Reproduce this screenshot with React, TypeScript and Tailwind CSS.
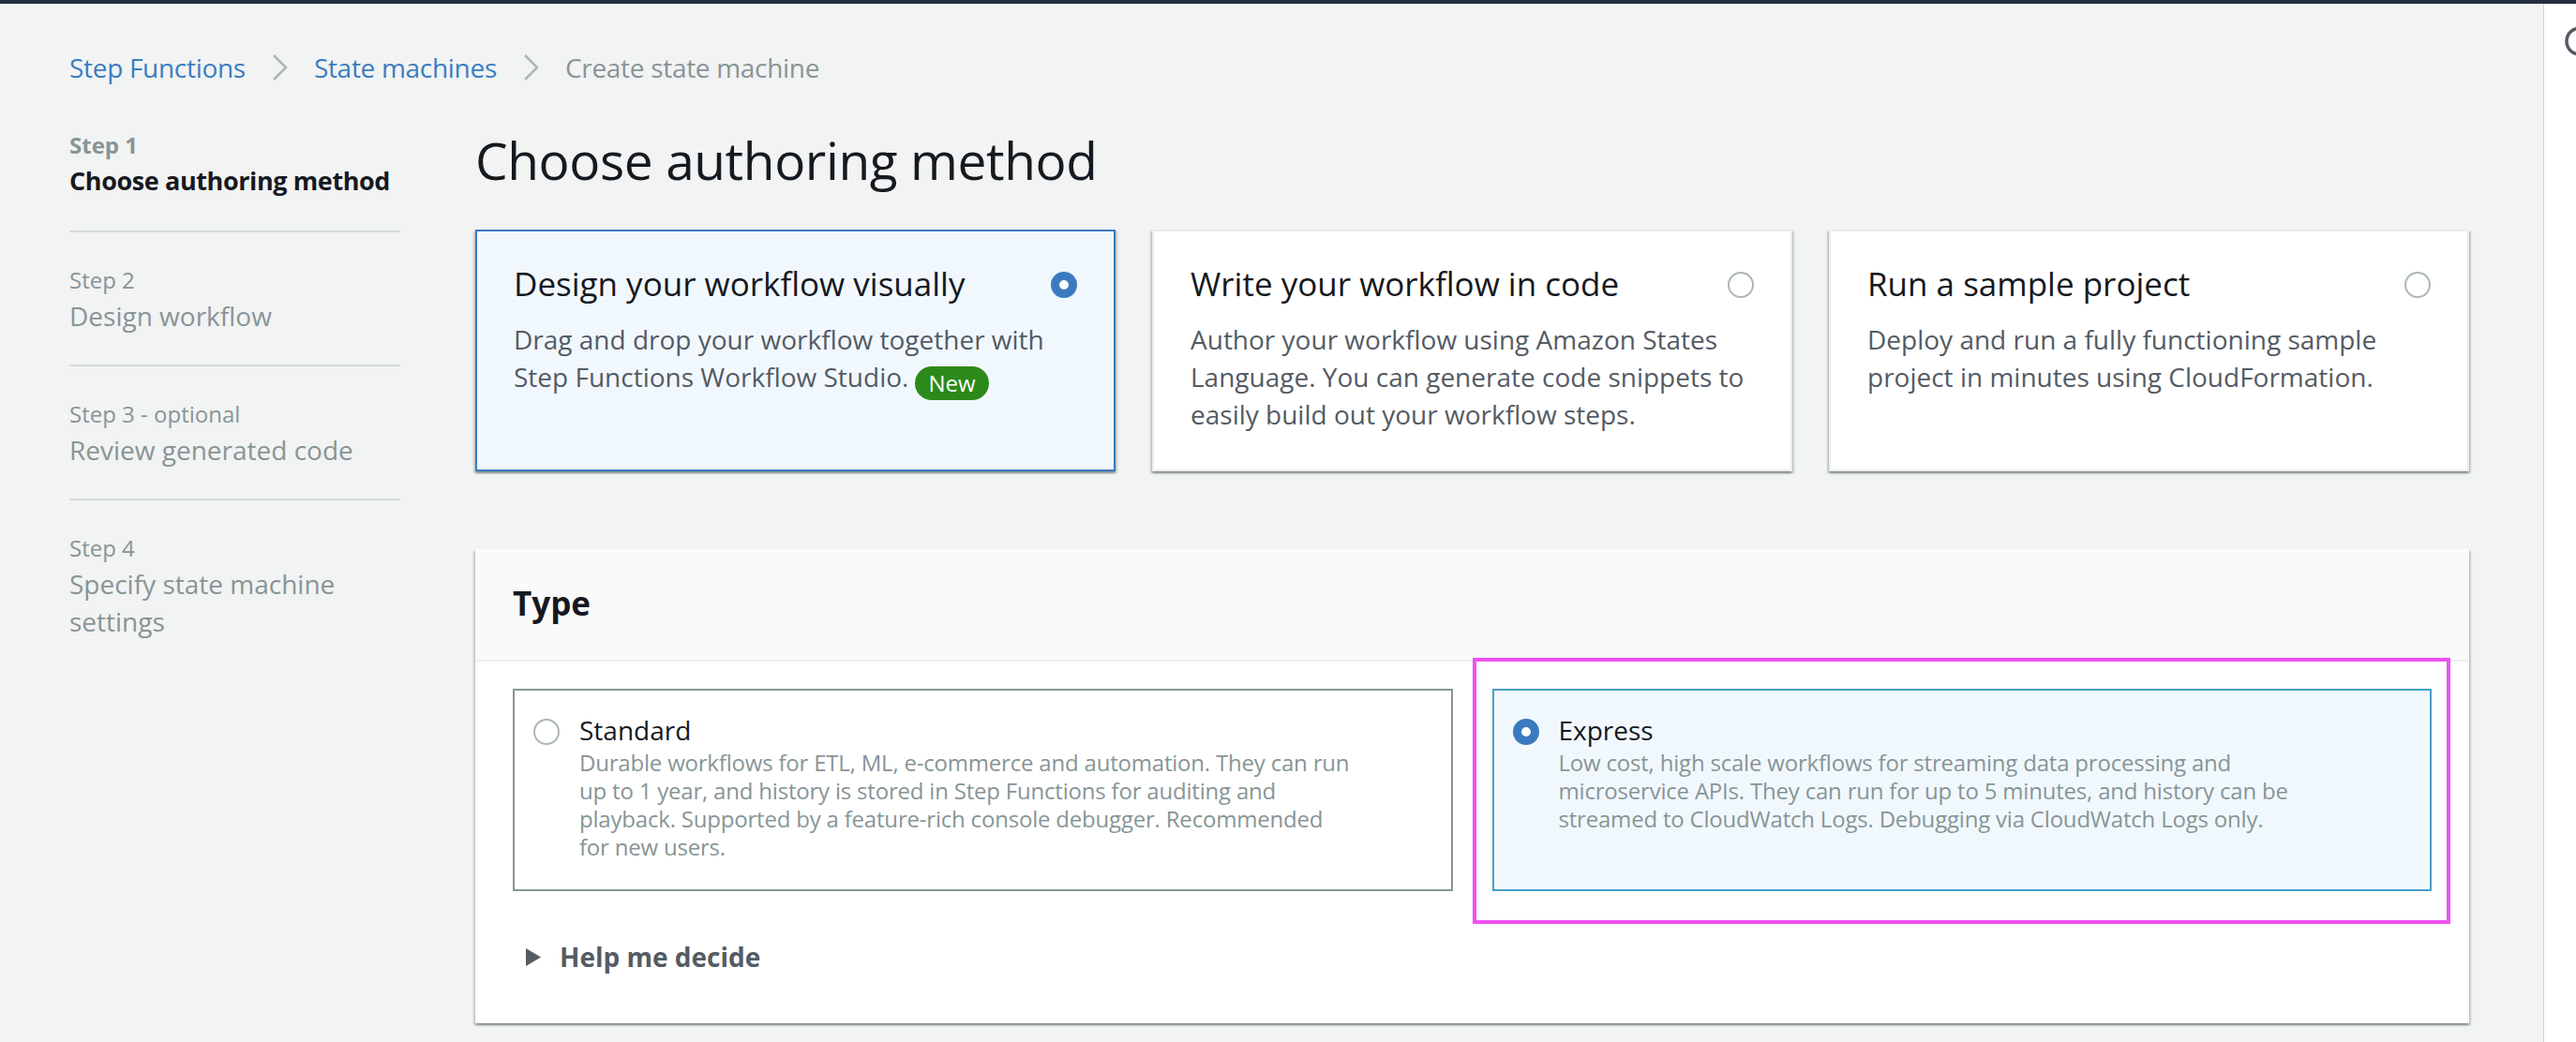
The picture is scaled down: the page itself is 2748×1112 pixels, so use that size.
import React from "react";

function Radio({ checked }: { checked?: boolean }) {
  return checked ? (
    <span className="block w-[28px] h-[28px] shrink-0 rounded-full border-[9px] border-[#3a7bbf] bg-white" />
  ) : (
    <span className="block w-[28px] h-[28px] shrink-0 rounded-full border-2 border-[#aab7b8] bg-white" />
  );
}

function Chevron() {
  return (
    <svg width="17" height="30" viewBox="0 0 17 30" className="mx-[28px] shrink-0">
      <path d="M2 2 L15 15 L2 28" fill="none" stroke="#aab7b8" strokeWidth="2.5" />
    </svg>
  );
}

const shadow =
  "shadow-[0_2px_2px_0_rgba(0,28,36,0.3),2px_2px_2px_0_rgba(0,28,36,0.15),-2px_2px_2px_0_rgba(0,28,36,0.15)]";

const steps = [
  { label: "Step 1", title: "Choose authoring method", active: true },
  { label: "Step 2", title: "Design workflow" },
  { label: "Step 3 - optional", title: "Review generated code" },
  { label: "Step 4", title: "Specify state machine settings" },
];

const tiles = [
  {
    title: "Design your workflow visually",
    text: "Drag and drop your workflow together with Step Functions Workflow Studio.",
    selected: true,
    badge: true,
  },
  {
    title: "Write your workflow in code",
    text: "Author your workflow using Amazon States Language. You can generate code snippets to easily build out your workflow steps.",
  },
  {
    title: "Run a sample project",
    text: "Deploy and run a fully functioning sample project in minutes using CloudFormation.",
  },
];

const standardLines = [
  "Durable workflows for ETL, ML, e-commerce and automation. They can run",
  "up to 1 year, and history is stored in Step Functions for auditing and",
  "playback. Supported by a feature-rich console debugger. Recommended",
  "for new users.",
];

const expressLines = [
  "Low cost, high scale workflows for streaming data processing and",
  "microservice APIs. They can run for up to 5 minutes, and history can be",
  "streamed to CloudWatch Logs. Debugging via CloudWatch Logs only.",
];

export default function App() {
  return (
    <div className="h-[1112px] overflow-hidden bg-[#f2f3f3] font-['Open_Sans',sans-serif] flex flex-col">
      {/* top strip */}
      <div className="h-[4px] shrink-0 bg-[#232f3e]" />

      <div className="flex flex-1">
        {/* main */}
        <div className="flex-1 pl-[74px] pr-[79px] pt-[48px]">
          {/* breadcrumb */}
          <nav className="flex items-center text-[28px] leading-[40px] tracking-[-0.3px]">
            <span className="text-[#3a7dc2]">Step Functions</span>
            <Chevron />
            <span className="text-[#3a7dc2]">State machines</span>
            <Chevron />
            <span className="text-[#879596]">Create state machine</span>
          </nav>

          <div className="flex gap-[80px]">
            {/* wizard steps */}
            <div className="w-[353px] shrink-0 pt-[46px]">
              {steps.map((s, i) => (
                <div
                  key={s.label}
                  className={
                    (i === 0 ? "pt-0 pb-[33px]" : "pt-[34px] pb-[32px]") +
                    (i < steps.length - 1 ? " border-b-2 border-[#d5dbdb]" : "")
                  }
                >
                  <div
                    className={
                      "text-[24px] leading-[34px] text-[#879596]" + (s.active ? " font-bold" : "")
                    }
                  >
                    {s.label}
                  </div>
                  <div
                    className={
                      "mt-[1px] leading-[40px]" +
                      (s.active
                        ? " whitespace-nowrap text-[27px] font-bold tracking-[-0.4px] text-[#16191f]"
                        : " text-[28px] text-[#879596]")
                    }
                  >
                    {s.title}
                  </div>
                </div>
              ))}
            </div>

            {/* content */}
            <div className="flex-1 pt-[43px]">
              <h1 className="text-[55px] leading-[72px] tracking-[-0.4px] text-[#16191f]">Choose authoring method</h1>

              <div className="mt-[38px] grid grid-cols-3 gap-[39px]">
                {tiles.map((t) => (
                  <div
                    key={t.title}
                    className={
                      "h-[258px] border-2 px-[39px] pt-[34px] " +
                      shadow +
                      (t.selected ? " border-[#3a7bbf] bg-[#f1f8fd]" : " border-[#eaeded] bg-white")
                    }
                  >
                    <div className="flex items-start justify-between">
                      <h2 className="text-[35px] leading-[44px] text-[#16191f]">{t.title}</h2>
                      <div className="mt-[9px]">
                        <Radio checked={t.selected} />
                      </div>
                    </div>
                    <p className="mt-[17px] text-[28px] leading-[40px] text-[#545b64]">
                      {t.text}
                      {t.badge && (
                        <span className="ml-[7px] inline-block h-[36px] rounded-full bg-[#2b8a1a] px-[14px] align-[-5px] text-[24px] leading-[36px] text-white">
                          New
                        </span>
                      )}
                    </p>
                  </div>
                ))}
              </div>

              {/* Type panel */}
              <div className={"relative mt-[83px] bg-white " + shadow}>
                <div className="border-b-2 border-[#eaeded] bg-[#fafafa] px-[40px] pt-[36px] pb-[38px]">
                  <h2 className="text-[35px] font-bold leading-[44px] text-[#16191f]">Type</h2>
                </div>

                <div className="px-[40px] pt-[29px] pb-[51px]">
                  <div className="grid grid-cols-2 gap-[42px]">
                    <div className="flex gap-[21px] border-2 border-[#879596] bg-white pl-[20px] pt-[22px] pb-[30px]">
                      <div className="mt-[8px]">
                        <Radio />
                      </div>
                      <div>
                        <div className="text-[28px] leading-[40px] text-[#16191f]">Standard</div>
                        <p className="text-[24px] leading-[30px] tracking-[-0.2px] text-[#879596]">
                          {standardLines.map((l, i) => (
                            <span key={i} className="block whitespace-nowrap">
                              {l}
                            </span>
                          ))}
                        </p>
                      </div>
                    </div>

                    <div className="flex gap-[21px] border-2 border-[#45a0c8] bg-[#f1f8fd] pl-[20px] pt-[22px] pb-[30px]">
                      <div className="mt-[8px]">
                        <Radio checked />
                      </div>
                      <div>
                        <div className="text-[28px] leading-[40px] text-[#16191f]">Express</div>
                        <p className="text-[24px] leading-[30px] tracking-[-0.2px] text-[#879596]">
                          {expressLines.map((l, i) => (
                            <span key={i} className="block whitespace-nowrap">
                              {l}
                            </span>
                          ))}
                        </p>
                      </div>
                    </div>
                  </div>

                  <div className="mt-[50px] flex items-center gap-[19px]">
                    <svg width="18" height="21" viewBox="0 0 18 21" className="ml-[13px]">
                      <polygon points="1,1 17,10.5 1,20" fill="#545b64" />
                    </svg>
                    <span className="text-[28px] font-bold leading-[40px] text-[#545b64]">Help me decide</span>
                  </div>
                </div>

                {/* highlight annotation */}
                <div className="pointer-events-none absolute left-[1064px] top-[116px] h-[284px] w-[1043px] border-[4px] border-[#ee50f2]" />
              </div>
            </div>
          </div>
        </div>

        {/* right help rail */}
        <div className="w-[35px] shrink-0 overflow-hidden border-l border-[#cfd5d6] bg-white">
          <svg width="32" height="32" viewBox="0 0 32 32" className="ml-[22px] mt-[24px] max-w-none">
            <circle cx="16" cy="16" r="14" fill="none" stroke="#545b64" strokeWidth="3.5" />
          </svg>
        </div>
      </div>
    </div>
  );
}
